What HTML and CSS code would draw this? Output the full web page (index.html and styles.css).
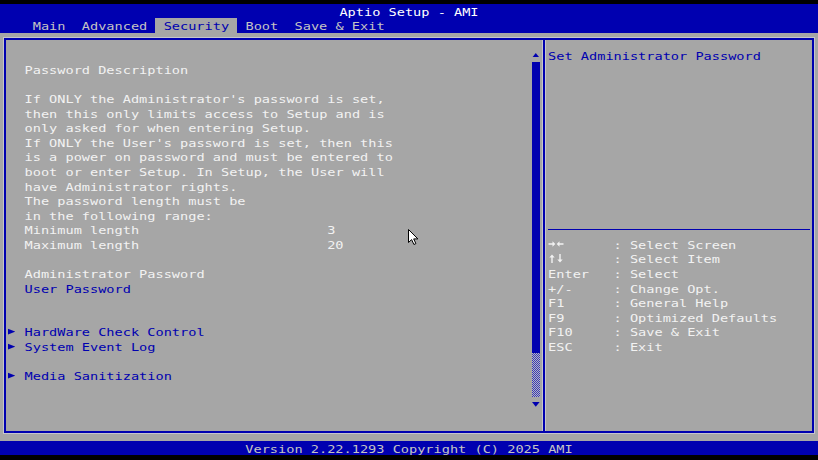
FILE: index.html
```html
<!DOCTYPE html>
<html lang="en">
<head>
<meta charset="utf-8">
<title>Aptio Setup - AMI</title>
<link rel="stylesheet" href="styles.css">
</head>
<body>
<div class="screen">
  <header class="titlebar"><span class="ln-i">Aptio Setup - AMI</span></header>
  <nav class="tabs">
    <span class="tab"><span class="ln-i">Main</span></span>
    <span class="tab"><span class="ln-i">Advanced</span></span>
    <span class="tab active"><span class="ln-i">Security</span></span>
    <span class="tab"><span class="ln-i">Boot</span></span>
    <span class="tab"><span class="ln-i">Save &amp; Exit</span></span>
  </nav>

  <main class="body">
    <div class="frame">
      <section class="left">
        <div class="items">
          <div class="blank"></div>
          <div class="ln text">Password Description</div>
          <div class="blank"></div>
          <div class="ln text">If ONLY the Administrator's password is set,</div>
          <div class="ln text">then this only limits access to Setup and is</div>
          <div class="ln text">only asked for when entering Setup.</div>
          <div class="ln text">If ONLY the User's password is set, then this</div>
          <div class="ln text">is a power on password and must be entered to</div>
          <div class="ln text">boot or enter Setup. In Setup, the User will</div>
          <div class="ln text">have Administrator rights.</div>
          <div class="ln text">The password length must be</div>
          <div class="ln text">in the following range:</div>
          <div class="ln text pair"><span class="label">Minimum length</span><span>3</span></div>
          <div class="ln text pair"><span class="label">Maximum length</span><span>20</span></div>
          <div class="blank"></div>
          <div class="ln text">Administrator Password</div>
          <div class="ln link">User Password</div>
          <div class="blank x2"></div>
          <div class="ln link sub"><svg class="marker" viewBox="0 0 7 7"><path d="M0 0L7 3.5L0 7Z"/></svg>HardWare Check Control</div>
          <div class="ln link sub"><svg class="marker" viewBox="0 0 7 7"><path d="M0 0L7 3.5L0 7Z"/></svg>System Event Log</div>
          <div class="blank"></div>
          <div class="ln link sub"><svg class="marker" viewBox="0 0 7 7"><path d="M0 0L7 3.5L0 7Z"/></svg>Media Sanitization</div>
        </div>
        <div class="scrollbar">
          <div class="sb-arrow up"><svg viewBox="0 0 8 5"><path d="M4 0L8 5H0Z"/></svg></div>
          <div class="sb-thumb"></div>
          <div class="sb-track"></div>
          <div class="sb-arrow down"><svg viewBox="0 0 8 5"><path d="M0 0H8L4 5Z"/></svg></div>
        </div>
      </section>

      <div class="divider"></div>

      <aside class="right">
        <div class="help"><div class="ln link">Set Administrator Password</div></div>
        <div class="rule"></div>
        <dl class="keys">
          <dt class="key-icon"><svg viewBox="0 0 16 8" width="16" height="8"><path d="M0.5 3.3H4.5V1.3L7.3 4L4.5 6.7V4.7H0.5Z"/><path d="M15.5 3.3H11.5V1.3L8.7 4L11.5 6.7V4.7H15.5Z"/></svg></dt><dd class="ln">:</dd><dd class="ln">Select Screen</dd>
          <dt class="key-icon"><svg viewBox="0 0 16 9" width="16" height="9"><path d="M3.3 9V3.5H1.3L4 0.5L6.7 3.5H4.7V9Z"/><path d="M11.3 0V5.5H9.3L12 8.5L14.7 5.5H12.7V0Z"/></svg></dt><dd class="ln">:</dd><dd class="ln">Select Item</dd>
          <dt class="ln">Enter</dt><dd class="ln">:</dd><dd class="ln">Select</dd>
          <dt class="ln">+/-</dt><dd class="ln">:</dd><dd class="ln">Change Opt.</dd>
          <dt class="ln">F1</dt><dd class="ln">:</dd><dd class="ln">General Help</dd>
          <dt class="ln">F9</dt><dd class="ln">:</dd><dd class="ln">Optimized Defaults</dd>
          <dt class="ln">F10</dt><dd class="ln">:</dd><dd class="ln">Save &amp; Exit</dd>
          <dt class="ln">ESC</dt><dd class="ln">:</dd><dd class="ln">Exit</dd>
        </dl>
      </aside>
    </div>
  </main>

  <footer class="status"><span class="ln-i">Version 2.22.1293 Copyright (C) 2025 AMI</span></footer>

  <svg class="pointer" viewBox="0 0 11 16" width="11" height="16">
    <path d="M0.5 0.5V13.5L3.6 10.6L5.9 15.5L7.9 14.6L5.7 9.9H9.9Z" fill="#fff" stroke="#000" stroke-width="1" stroke-linejoin="miter"/>
  </svg>
</div>
</body>
</html>
```

FILE: styles.css
```css
:root {
  --cw: 8.18px;          /* one character cell */
  --rh: 14.567px;        /* one text row */
  --blue: #0000b0;
  --gray: #a6a6a6;
  --white: #f2f2f2;
  --dim: #c4c4c4;
  --edge: #c6c6cc;
}

* { box-sizing: border-box; }

html, body {
  margin: 0;
  padding: 0;
  background: #000;
}

.screen {
  position: relative;
  width: 818px;
  height: 460px;
  padding-top: 3.8px;
  display: flex;
  flex-direction: column;
  background: #000;
  font-family: "DejaVu Sans Mono", "Liberation Mono", monospace;
  font-size: 13.6px;
  line-height: var(--rh);
  white-space: nowrap;
  overflow: hidden;
}

/* glyphs of the setup font are short and wide */
.ln { white-space: pre; transform: translateY(.6px) scaleY(.82); }
.ln-i { display: inline-block; white-space: pre; transform: translateY(.6px) scaleY(.82); }

/* ---- title and menu tabs ---- */
.titlebar {
  height: var(--rh);
  flex: none;
  background: var(--blue);
  color: #fff;
  text-align: center;
}

.tabs {
  height: var(--rh);
  flex: none;
  background: var(--blue);
  padding-left: calc(var(--cw) * 3);
  display: flex;
}

.tab {
  padding: 0 var(--cw);
  color: var(--dim);
}

.tab.active {
  background: var(--gray);
  color: var(--blue);
}

/* ---- main area ---- */
.body {
  height: calc(var(--rh) * 28);
  flex: none;
  background: var(--gray);
  padding: 5.1px 4px 7.8px 4px;
}

.frame {
  height: 100%;
  display: flex;
  border: 2px solid var(--blue);
  box-shadow: 0 0 0 1px var(--edge);
}

.left {
  width: 537px;
  display: grid;
  grid-template-columns: 1fr var(--cw);
  align-items: start;
  padding: 7.5px 3.1px 0 2.18px;
}

.divider {
  width: 2px;
  background: var(--blue);
  box-shadow: -1px 0 0 var(--edge), 1px 0 0 var(--edge);
}

.right {
  flex: 1;
  padding: 7.5px 2px 0 3.1px;
}

/* ---- item list ---- */
.items > div {
  height: var(--rh);
  padding-left: calc(var(--cw) * 2);
}

.items > .blank.x2 { height: calc(var(--rh) * 2); }

.text { color: var(--white); }
.link { color: var(--blue); }

.pair { display: flex; }
.pair .label { width: calc(var(--cw) * 37); }

.sub {
  position: relative;
}

.marker {
  position: absolute;
  left: 0;
  top: 3.4px;
  width: 7.2px;
  height: 8px;
  fill: var(--blue);
}

/* ---- scroll bar ---- */
.scrollbar {
  display: flex;
  flex-direction: column;
}

.sb-arrow {
  height: var(--rh);
  display: flex;
  justify-content: center;
}

.sb-arrow svg {
  width: 7.6px;
  height: 4.8px;
  fill: var(--blue);
}

.sb-arrow.up { align-items: flex-end; padding-bottom: 4.6px; }
.sb-arrow.down { align-items: center; }

.sb-thumb {
  height: calc(var(--rh) * 20);
  background: var(--blue);
}

.sb-track {
  height: calc(var(--rh) * 3);
  background: repeating-conic-gradient(#3a3ab4 0 25%, #b4b4c4 0 50%) 0 0 / 2px 2px;
}

/* ---- help panel ---- */
.help {
  height: calc(var(--rh) * 12);
}

.rule {
  height: var(--rh);
  position: relative;
}

.rule::after {
  content: "";
  position: absolute;
  left: 0;
  right: 0;
  top: 7px;
  height: 1px;
  background: var(--blue);
}

.keys {
  margin: 0;
  display: grid;
  grid-template-columns: calc(var(--cw) * 8) calc(var(--cw) * 2) 1fr;
  grid-auto-rows: var(--rh);
  color: var(--white);
}

.keys dd { margin: 0; }

.key-icon {
  display: flex;
  align-items: center;
  padding-bottom: 1px;
}

.key-icon svg { fill: var(--white); }

/* ---- status line ---- */
.status {
  height: var(--rh);
  flex: none;
  background: var(--blue);
  color: var(--dim);
  text-align: center;
}

/* ---- mouse pointer ---- */
.pointer {
  position: absolute;
  left: 408px;
  top: 229px;
}
```
